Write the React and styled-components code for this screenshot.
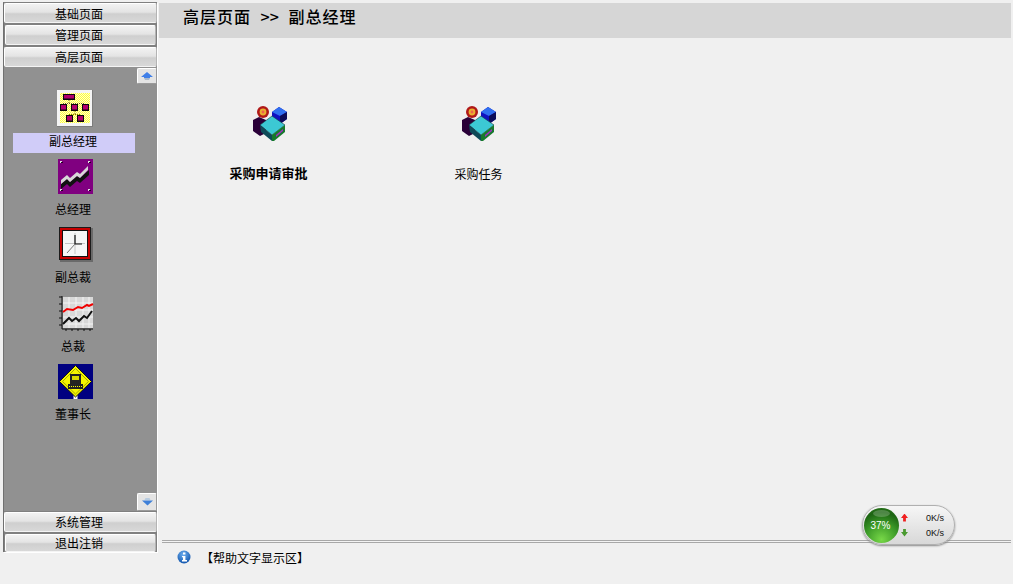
import React from "react";
import styled, { createGlobalStyle } from "styled-components";

const FONT = `"Noto Sans CJK SC", "Liberation Sans", sans-serif`;

const GlobalStyle = createGlobalStyle`
  html, body {
    margin: 0;
    padding: 0;
    height: 100%;
    overflow: hidden;
    background: #f0f0f0;
    font-family: ${FONT};
    font-size: 12px;
    color: #000;
  }
`;

function OrgIcon() {
  return (
    <svg width="36" height="37" viewBox="0 0 36 37">
      <defs>
        <pattern id="dither" width="2" height="2" patternUnits="userSpaceOnUse">
          <rect width="2" height="2" fill="#fdfd40" />
          <rect width="1" height="1" fill="#ffffc8" />
          <rect x="1" y="1" width="1" height="1" fill="#ffffc8" />
        </pattern>
      </defs>
      <rect width="36" height="37" fill="#7c7c7c" />
      <rect width="35" height="36" fill="#f4f4f4" />
      <rect x="3" y="3" width="30" height="30" fill="url(#dither)" />
      <path d="M12 10v4M6 13.5h22M18 21v3M12 24.5h11" stroke="#7a6a10" strokeDasharray="1 1" fill="none" />
      {[
        [6, 4, 12, 6],
        [3, 14, 7, 7],
        [14, 14, 7, 7],
        [25, 14, 7, 7],
        [9, 25, 7, 7],
        [20, 25, 7, 7],
      ].map(([x, y, w, h]) => (
        <g key={`${x}-${y}`}>
          <rect x={x} y={y} width={w} height={h} fill="#0a0a0a" />
          <rect x={x + 1} y={y + 1} width={w - 2} height={h - 2.5} fill="#b4006c" />
        </g>
      ))}
    </svg>
  );
}

function TrendIcon() {
  return (
    <svg width="35" height="35" viewBox="0 0 35 35">
      <rect width="35" height="35" fill="#800080" />
      <path d="M3 25l6-5 3 3 7-6 3 2 9-8v5l-9 8-3-2-7 6-3-3-6 5z" fill="#111" />
      <path d="M3 21l6-5 3 3 7-6 3 2 8-8v4l-8 8-3-2-7 6-3-3-6 5z" fill="#d8d8d8" />
      {[[2, 2], [30, 2], [2, 30], [30, 30]].map(([x, y]) => (
        <g key={`${x}-${y}`}>
          <rect x={x} y={y} width="2" height="2" fill="#e0e0e0" />
          <rect x={x + 1} y={y + 1} width="2" height="1" fill="#200020" />
        </g>
      ))}
    </svg>
  );
}

function ClockIcon() {
  return (
    <svg width="34" height="35" viewBox="0 0 34 35">
      <rect x="1" y="1" width="33" height="34" fill="#6a6a6a" />
      <rect width="32" height="33" fill="#1c1c1c" />
      <rect x="1" y="1" width="30" height="31" fill="#c80000" />
      <rect x="3.5" y="3.5" width="25" height="26" fill="#f6f6f6" stroke="#111" />
      <path d="M6 16.5h20M16 6v21" stroke="#c4c4c4" />
      <path d="M16 8v9h7" stroke="#111" strokeWidth="1.2" fill="none" />
      <path d="M16 17l-8 9" stroke="#777" />
    </svg>
  );
}

function ChartIcon() {
  return (
    <svg width="36" height="35" viewBox="0 0 36 35">
      <rect x="5" y="1" width="30" height="31" fill="#d8d8d8" />
      <path d="M5 7h30M5 14h30M5 21h30M5 28h30M11 1v31M18 1v31M25 1v31M31 1v31" stroke="#f4f4f4" />
      <path d="M1 1h3M1 8h3M1 15h3M1 22h3M1 29h3M4 0v33h31" stroke="#111" fill="none" />
      <path d="M8 33v2M14 33v2M20 33v2M26 33v2M32 33v2" stroke="#111" />
      <path d="M5 16l4-3 6 1 5-3 4 1 5-3 2 1 4-2" stroke="#f00000" strokeWidth="2" fill="none" />
      <path d="M5 28l6-6 3 3 4-3 3 3 5-5 3 2 5-7" stroke="#111" strokeWidth="2" fill="none" />
    </svg>
  );
}

function SignIcon() {
  return (
    <svg width="35" height="35" viewBox="0 0 35 35">
      <rect width="35" height="35" fill="#000080" />
      <rect x="15.5" y="28" width="4" height="7" fill="#fff" />
      <path d="M17.5 1.5L33.5 17.5 17.5 33 1.5 17.5z" fill="#f4f400" stroke="#111" />
      <path d="M17.5 4.5L30.5 17.5 17.5 30 4.5 17.5z" fill="none" stroke="#a8a800" />
      <rect x="12" y="10" width="11" height="10" fill="#222" />
      <rect x="14" y="12" width="7" height="4" fill="#d8d800" />
      <rect x="10" y="20" width="15" height="5" fill="#222" />
      <path d="M11 22.5h13" stroke="#f4f400" strokeDasharray="1 1" />
    </svg>
  );
}

function CubesIcon() {
  return (
    <svg width="36" height="36" viewBox="0 0 36 36">
      <circle cx="11" cy="7" r="6" fill="#b01818" />
      <circle cx="11" cy="7" r="3.4" fill="#e8b030" />
      <circle cx="11" cy="7" r="1.4" fill="#f06050" />
      <path d="M20 7l7-5 8 5v7l-7 5-8-6z" fill="#1010c0" />
      <path d="M20 7l7-5 8 5-7 4z" fill="#2f6ff0" />
      <path d="M28 11l7-4v7l-7 5z" fill="#0c0c58" />
      <path d="M1 15l6-3 7 3v13l-6 3-7-5z" fill="#2a0038" />
      <path d="M8 20l12-9 13 9-13 10z" fill="#3cc8d4" stroke="#1a3a40" strokeWidth="0.6" />
      <path d="M8 20l12 10v6L9 27z" fill="#0e4a58" />
      <path d="M20 30l13-10v7l-11 9h-2z" fill="#167a2c" />
      <path d="M24 30l7-6v2l-7 6z" fill="#a030c0" />
    </svg>
  );
}

function UpArrow() {
  return (
    <svg width="12" height="8" viewBox="0 0 12 8">
      <path d="M6 0l6 5H9v1H3V5H0z" fill="#3f7fe8" />
      <path d="M3 6h6L8 8H4z" fill="#a8b8cc" />
    </svg>
  );
}

function DownArrow() {
  return (
    <svg width="11" height="8" viewBox="0 0 11 8">
      <path d="M3.5 0h4l1 2h-6z" fill="#b8cce0" />
      <path d="M0 2.5h11L5.5 7.5z" fill="#3f80d8" />
    </svg>
  );
}

function InfoIcon() {
  return (
    <svg width="14" height="14" viewBox="0 0 14 14">
      <defs>
        <radialGradient id="infoBall" cx="45%" cy="30%" r="75%">
          <stop offset="0%" stopColor="#6fb0f0" />
          <stop offset="100%" stopColor="#0b4fa8" />
        </radialGradient>
      </defs>
      <circle cx="7" cy="7" r="6.5" fill="url(#infoBall)" />
      <rect x="6" y="2.5" width="2.4" height="2" fill="#fff" />
      <path d="M5 6h3.4v4H10v1.4H5V10h1V7.2H5z" fill="#fff" />
    </svg>
  );
}

const Page = styled.div`
  position: relative;
  display: flex;
  width: 1013px;
  height: 584px;
  background: #f0f0f0;
`;

const Sidebar = styled.nav`
  display: flex;
  flex-direction: column;
  flex: none;
  box-sizing: border-box;
  width: 154px;
  height: 550px;
  margin: 2px 0 0 3px;
  border-top: 1px solid #808080;
  border-left: 1px solid #707070;
  background: #808080;
  box-shadow: 1px 1px 0 #fff;
`;

const NavButton = styled.button`
  flex: none;
  box-sizing: border-box;
  width: ${(p) => (p.$inset ? "151px" : "153px")};
  height: ${(p) => p.$height || 20}px;
  margin: ${(p) => (p.$inset ? `2px 0 ${p.$last ? 0 : 2}px 1px` : "0")};
  padding: ${(p) => (p.$low ? "1px 3px 0 0" : "0 3px 0 0")};
  border: 1px solid #fff;
  border-right-color: #b4b4b4;
  border-bottom-color: #f4f4f4;
  border-radius: 2px;
  background: linear-gradient(#f2f2f2 0%, #e4e4e4 45%, #cfcfcf 55%, #d8d8d8 100%);
  font-family: ${FONT};
  font-size: 12px;
  line-height: ${(p) => (p.$height || 20) - 2}px;
  color: #000;
`;

const Panel = styled.div`
  position: relative;
  flex: none;
  box-sizing: border-box;
  width: 153px;
  height: 444px;
  margin-bottom: 1px;
  padding: 23px 0 0 9px;
  background: #919191;
`;

const ScrollButton = styled.button`
  position: absolute;
  right: 0;
  ${(p) => (p.$down ? "bottom: 0;" : "top: 1px;")}
  display: flex;
  align-items: center;
  justify-content: center;
  box-sizing: border-box;
  width: 20px;
  height: ${(p) => (p.$down ? 18 : 16)}px;
  padding: 0;
  border: 1px solid #fff;
  border-right-color: #9a9a9a;
  border-bottom-color: #9a9a9a;
  border-radius: 2px;
  background: #e4e4e4;
`;

const Item = styled.div`
  display: flex;
  flex-direction: column;
  align-items: center;
  width: 122px;
  height: 68.5px;
`;

const ItemIcon = styled.div`
  display: flex;
  justify-content: center;
  width: 36px;
  height: 37px;
  margin-bottom: 6px;
  margin-left: ${(p) => (p.$first ? 1 : 3)}px;
`;

const ItemLabel = styled.div`
  width: 100%;
  height: 20px;
  padding-right: 2px;
  box-sizing: border-box;
  line-height: ${(p) => (p.$active ? 16 : 14)}px;
  text-align: center;
  background: ${(p) => (p.$active ? "#d0ccf8" : "transparent")};
`;

const Main = styled.main`
  display: flex;
  flex-direction: column;
  flex: 1;
  min-width: 0;
  height: 584px;
  margin-left: 2px;
`;

const Header = styled.header`
  flex: none;
  height: 35px;
  margin: 3px 2px 0 0;
  padding-left: 24px;
  background: #d6d6d6;
  font-size: 16px;
  font-weight: 500;
  line-height: 27px;
  letter-spacing: 1px;
  word-spacing: 5px;
`;

const Separator = styled.span`
  letter-spacing: 0;
`;

const Content = styled.section`
  display: flex;
  flex: 1;
  padding: 67px 0 0 6px;
`;

const Tile = styled.div`
  display: flex;
  flex-direction: column;
  align-items: center;
  width: 209px;
`;

const TileLabel = styled.div`
  margin-top: 25px;
  padding-right: ${(p) => (p.$bold ? 2 : 0)}px;
  line-height: ${(p) => (p.$bold ? 14 : 16)}px;
  font-size: ${(p) => (p.$bold ? 13 : 12)}px;
  font-weight: ${(p) => (p.$bold ? 700 : 400)};
`;

const Footer = styled.footer`
  display: flex;
  flex: none;
  align-items: center;
  box-sizing: border-box;
  height: 44px;
  margin: 0 2px 0 3px;
  padding: 0 0 11px 15px;
  border-top: 1px solid #a8a8a8;
  box-shadow: inset 0 1px 0 #f4f4f4, inset 0 2px 0 #a8a8a8;
`;

const HelpText = styled.span`
  margin-left: 10px;
`;

const Meter = styled.div`
  position: absolute;
  left: 862px;
  top: 505px;
  display: flex;
  align-items: center;
  box-sizing: border-box;
  width: 93px;
  height: 40px;
  padding-left: 1px;
  border: 1px solid #b0b0b0;
  border-radius: 20px;
  background: linear-gradient(#f6f6f6, #d8d8d8);
  box-shadow: 0 1px 2px #888;
`;

const Ball = styled.div`
  position: relative;
  display: flex;
  align-items: center;
  justify-content: center;
  flex: none;
  box-sizing: border-box;
  width: 35px;
  height: 35px;
  padding-right: 2px;
  border-radius: 50%;
  background: radial-gradient(circle at 50% 90%, #78d848 0%, #3c9a28 45%, #1c6412 75%, #2f7a20 100%);
  color: #fff;
  font-family: "Liberation Sans", sans-serif;
  font-size: 10px;

  &::before {
    content: "";
    position: absolute;
    top: 2px;
    left: 9px;
    width: 17px;
    height: 7px;
    border-radius: 50%;
    background: rgba(255, 255, 255, 0.22);
  }
`;

const Rates = styled.div`
  display: flex;
  flex-direction: column;
  gap: 2px;
  flex: 1;
  padding: 0 10px 0 2px;
`;

const Rate = styled.div`
  display: flex;
  align-items: center;
  justify-content: space-between;
  height: 13px;
  font-family: "Liberation Sans", sans-serif;
  font-size: 9px;
  color: #111;
`;

const Arrow = styled.span`
  width: 7px;
  height: 8px;
  background: ${(p) => p.$color};
  clip-path: ${(p) =>
    p.$down
      ? "polygon(30% 0, 70% 0, 70% 45%, 100% 45%, 50% 100%, 0 45%, 30% 45%)"
      : "polygon(50% 0, 100% 55%, 70% 55%, 70% 100%, 30% 100%, 30% 55%, 0 55%)"};
`;

const items = [
  { label: "副总经理", icon: <OrgIcon />, active: true },
  { label: "总经理", icon: <TrendIcon /> },
  { label: "副总裁", icon: <ClockIcon /> },
  { label: "总裁", icon: <ChartIcon /> },
  { label: "董事长", icon: <SignIcon /> },
];

export default function App() {
  return (
    <Page>
      <GlobalStyle />
      <Sidebar>
        <NavButton $low>基础页面</NavButton>
        <NavButton $inset>管理页面</NavButton>
        <NavButton>高层页面</NavButton>
        <Panel>
          <ScrollButton>
            <UpArrow />
          </ScrollButton>
          {items.map((item) => (
            <Item key={item.label}>
              <ItemIcon $first={item.active}>{item.icon}</ItemIcon>
              <ItemLabel $active={item.active}>{item.label}</ItemLabel>
            </Item>
          ))}
          <ScrollButton $down>
            <DownArrow />
          </ScrollButton>
        </Panel>
        <NavButton>系统管理</NavButton>
        <NavButton $inset $last $height={18}>退出注销</NavButton>
      </Sidebar>
      <Main>
        <Header>高层页面 <Separator>&gt;&gt;</Separator> 副总经理</Header>
        <Content>
          <Tile>
            <CubesIcon />
            <TileLabel $bold>采购申请审批</TileLabel>
          </Tile>
          <Tile>
            <CubesIcon />
            <TileLabel>采购任务</TileLabel>
          </Tile>
        </Content>
        <Footer>
          <InfoIcon />
          <HelpText>【帮助文字显示区】</HelpText>
        </Footer>
      </Main>
      <Meter>
        <Ball>37%</Ball>
        <Rates>
          <Rate>
            <Arrow $color="#f02020" />
            0K/s
          </Rate>
          <Rate>
            <Arrow $color="#4a9a30" $down />
            0K/s
          </Rate>
        </Rates>
      </Meter>
    </Page>
  );
}
